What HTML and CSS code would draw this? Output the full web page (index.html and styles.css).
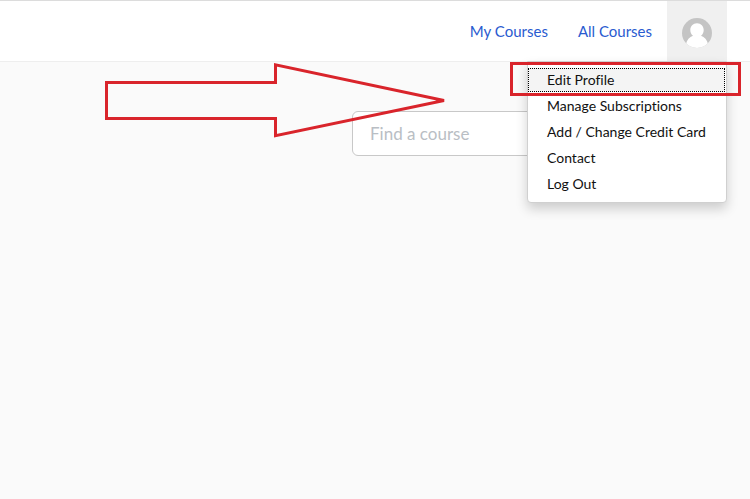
FILE: index.html
```html
<!DOCTYPE html>
<html lang="en">
<head>
<meta charset="utf-8">
<title>Courses</title>
<link rel="stylesheet" href="styles.css">
</head>
<body>
<header class="topbar">
  <nav class="links">
    <a href="#">My Courses</a>
    <a href="#">All Courses</a>
  </nav>
  <div class="account">
    <button class="account-button" type="button" aria-label="Account">
      <svg class="avatar" viewBox="0 0 30 30" aria-hidden="true">
        <defs><clipPath id="disc"><circle cx="15" cy="15" r="15"/></clipPath></defs>
        <g clip-path="url(#disc)">
          <rect width="30" height="30" fill="#c4c4c4"/>
          <path d="M15 5.200C11 5.200 8.300 8.200 8.300 12C8.300 14.500 9.300 16.500 11 17.800C7.500 19 4.800 22 4 26V31H26V26C25.200 22 22.500 19 19 17.800C20.700 16.500 21.700 14.500 21.700 12C21.700 8.200 19 5.200 15 5.200Z" fill="#fff"/>
        </g>
      </svg>
    </button>
    <ul class="menu">
      <li><a class="current" href="#">Edit Profile</a></li>
      <li><a href="#">Manage Subscriptions</a></li>
      <li><a href="#">Add / Change Credit Card</a></li>
      <li><a href="#">Contact</a></li>
      <li><a href="#">Log Out</a></li>
    </ul>
    <span class="highlight"></span>
  </div>
</header>
<main class="content">
  <form class="search">
    <input type="search" placeholder="Find a course" aria-label="Find a course">
  </form>
  <svg class="arrow" viewBox="0 0 344 78" width="344" height="78" aria-hidden="true">
    <path d="M1.500 20.500H170.500V2.800L339 38.500L170.500 73.700V56.500H1.500Z" fill="none" stroke="#d9242b" stroke-width="3"/>
  </svg>
</main>
</body>
</html>
```
FILE: styles.css
```css
* {
  box-sizing: border-box;
}

body {
  margin: 0;
  min-height: 100vh;
  background: #fafafa;
  color: #111;
  font-family: Lato, "Liberation Sans", sans-serif;
  font-variant-ligatures: none;
}

.topbar {
  display: flex;
  justify-content: flex-end;
  height: 62px;
  padding-right: 23px;
  border-top: 1px solid #dcdcdc;
  border-bottom: 1px solid #eee;
  background: #fff;
}

.links {
  display: flex;
  align-items: center;
  gap: 30px;
  margin-right: 15px;
}

.links a {
  color: #2a5bd0;
  font-size: 15px;
  line-height: 20px;
  text-decoration: none;
}

.account {
  position: relative;
  display: flex;
}

.account-button {
  display: flex;
  align-items: center;
  padding: 4px 15px 0;
  border: 0;
  background: #f0f0f0;
}

.avatar {
  width: 30px;
  height: 30px;
}

.menu {
  position: absolute;
  z-index: 2;
  top: 60px;
  right: 0;
  width: 200px;
  margin: 0;
  padding: 5px 0;
  border: 1px solid #d0d0d0;
  border-radius: 0 0 4px 4px;
  background: #fff;
  box-shadow: 0 6px 12px rgba(0, 0, 0, 0.18);
  list-style: none;
}

.menu li {
  padding: 1px 1px 1px 0;
}

.menu a {
  display: block;
  padding: 0 19px;
  color: #111;
  font-size: 14px;
  line-height: 24px;
  white-space: nowrap;
  text-decoration: none;
}

.menu .current {
  background: #f4f4f4;
  outline: 1px dotted #000;
  outline-offset: -1px;
}

.highlight {
  position: absolute;
  z-index: 3;
  top: 61px;
  right: -14px;
  width: 231px;
  height: 34px;
  border: 3px solid #d9242b;
  pointer-events: none;
}

.content {
  position: relative;
  display: flex;
  justify-content: flex-end;
  padding: 49px 24px;
}

.search {
  width: 374px;
}

.search input {
  display: block;
  width: 100%;
  height: 45px;
  padding: 0 17px;
  border: 1px solid #c8c8c8;
  border-radius: 6px;
  background: #fff;
  font-family: inherit;
  font-size: 17px;
}

.search input::placeholder {
  color: #b9bec4;
  opacity: 1;
}

.arrow {
  position: absolute;
  top: 0;
  left: 105px;
  pointer-events: none;
}
```
